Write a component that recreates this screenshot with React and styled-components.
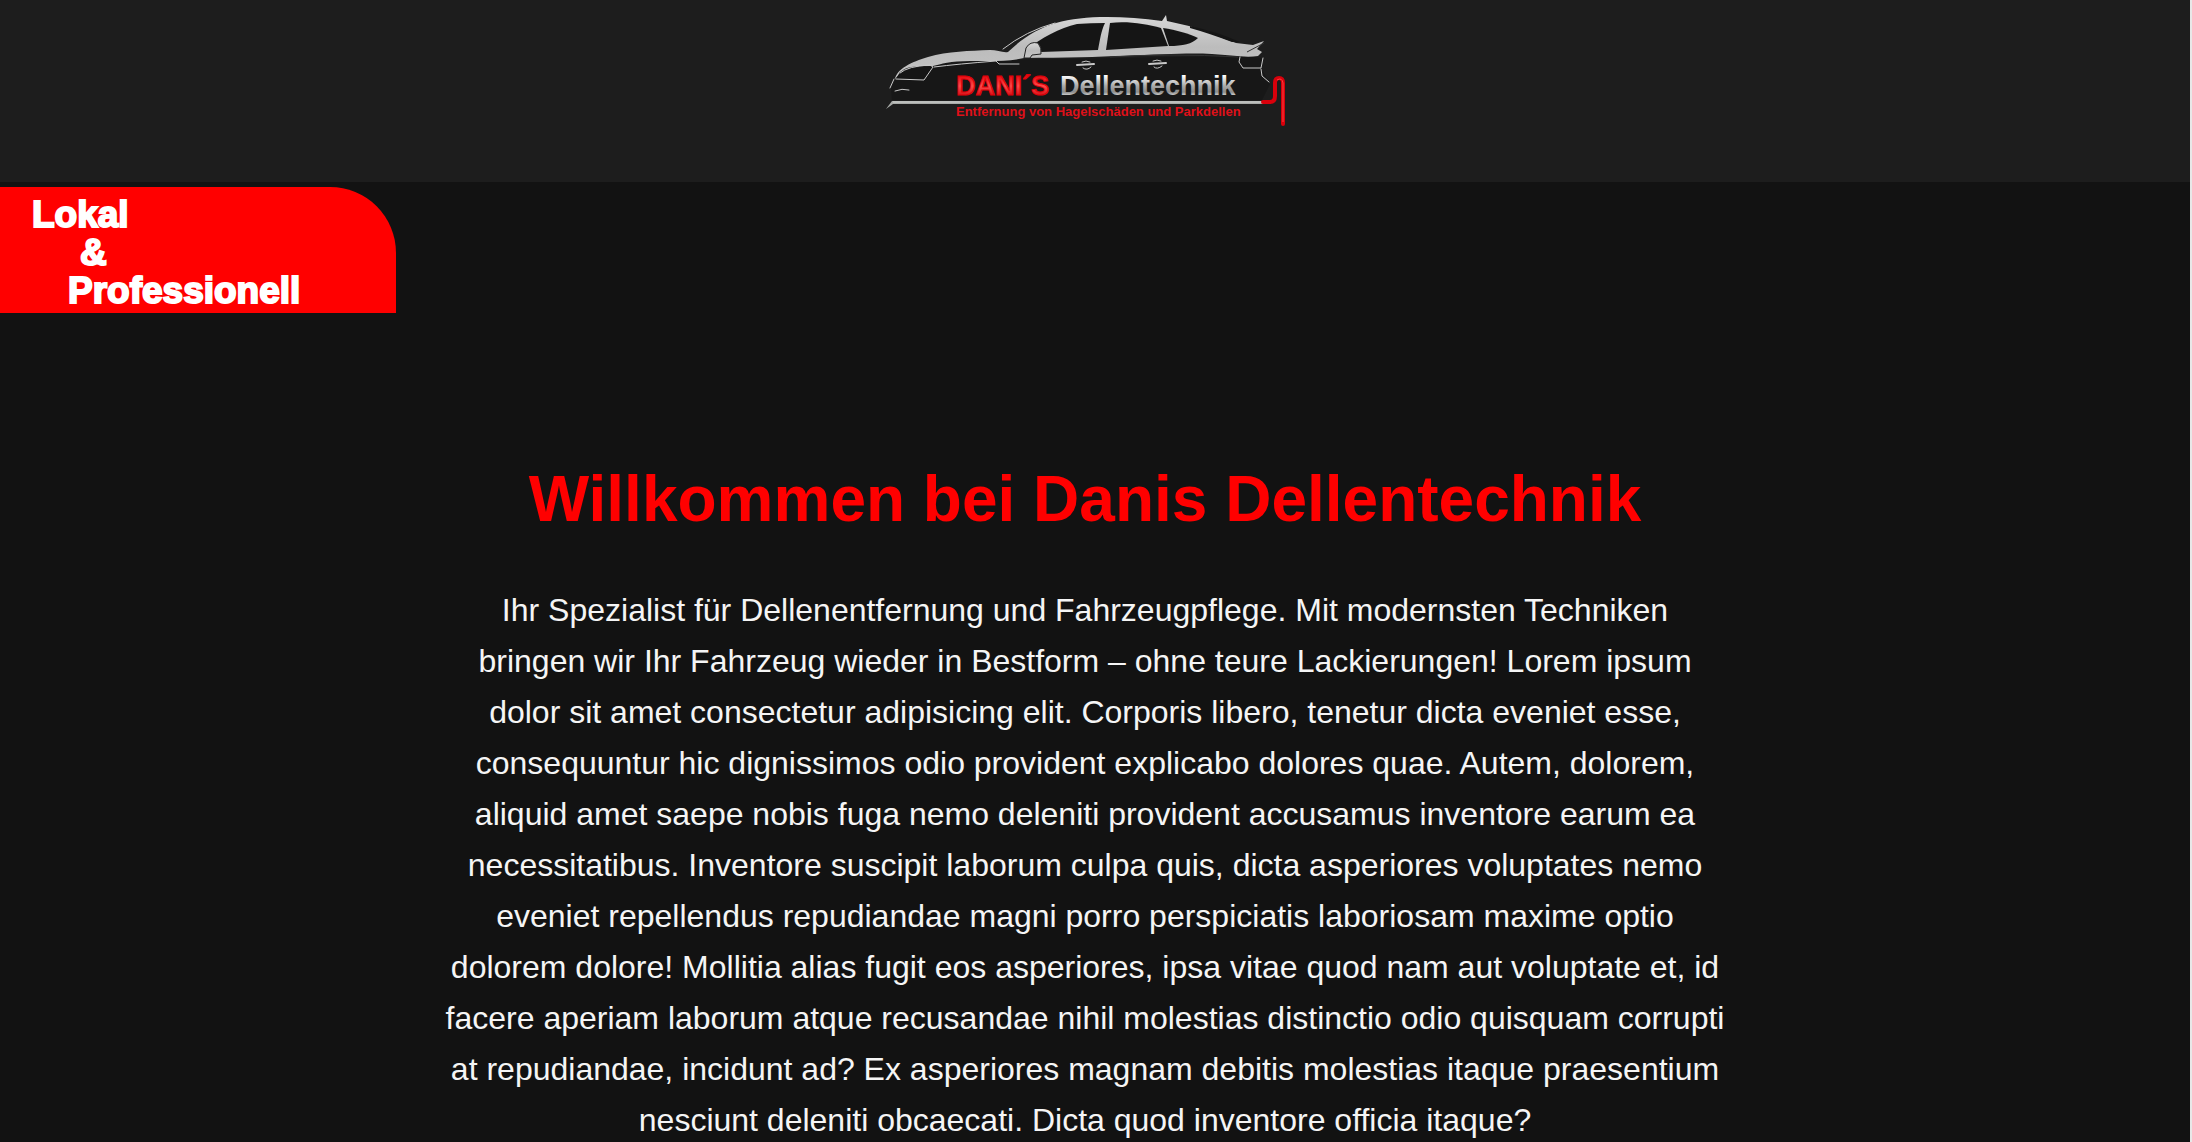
import React from "react";
import styled, { createGlobalStyle } from "styled-components";

const GlobalStyle = createGlobalStyle`
  * { box-sizing: border-box; }
  body {
    margin: 0;
    background: #121212;
    color: #f5f5f5;
    font-family: "Liberation Sans", Arial, sans-serif;
  }
`;

const Page = styled.div`
  min-height: 100vh;
  border-right: 2px solid #e8e8e8;
  overflow: hidden;
`;

const Header = styled.header`
  display: flex;
  justify-content: center;
  height: 182px;
  padding: 8px 18px 0 0;
  background: #1d1d1d;
`;

const LogoLink = styled.a`
  display: block;
  height: 132px;
`;

const Banner = styled.aside`
  width: 396px;
  margin-top: 5px;
  padding: 9px 32px 3px;
  border-top-right-radius: 66px;
  background: #ff0000;
  color: #ffffff;
  font-size: 37px;
  font-weight: bold;
  line-height: 38px;
  -webkit-text-stroke: 2px #ffffff;
`;

const Slogan = styled.span`
  display: block;
  padding-left: ${(p) => p.$indent}px;
`;

const Welcome = styled.main`
  display: flex;
  flex-direction: column;
  align-items: center;
  gap: 50px;
  padding: 150px 20px 0 0;
  text-align: center;
`;

const Title = styled.h1`
  margin: 0;
  color: #ff0000;
  font-size: 64px;
  line-height: 72px;
`;

const Intro = styled.p`
  max-width: 1280px;
  margin: 0;
  font-size: 32px;
  line-height: 51px;
`;

const LogoText = styled.text`
  font-weight: bold;
  font-size: ${(p) => p.$size}px;
`;

function Logo() {
  return (
    <svg width="420" height="132" viewBox="876 8 420 132" role="img" aria-label="Dani´s Dellentechnik">
      <defs>
        <linearGradient id="body" x1="0" y1="0" x2="0" y2="1">
          <stop offset="0" stopColor="#d8d8d8" />
          <stop offset="0.5" stopColor="#bcbcbc" />
          <stop offset="1" stopColor="#c4c4c4" />
        </linearGradient>
        <linearGradient id="chrome" x1="0" y1="0" x2="0" y2="1">
          <stop offset="0.15" stopColor="#ffffff" />
          <stop offset="0.5" stopColor="#a8a8a8" />
          <stop offset="0.7" stopColor="#8c8c8c" />
          <stop offset="0.85" stopColor="#e8e8e8" />
        </linearGradient>
        <linearGradient id="red" x1="0" y1="0" x2="0" y2="1">
          <stop offset="0.1" stopColor="#e00008" />
          <stop offset="0.5" stopColor="#ff4a4a" />
          <stop offset="0.9" stopColor="#c80008" />
        </linearGradient>
      </defs>
      <path fill="#171717" d="M897 78L935 64L1000 60L1240 56L1262 58L1261 68L1270 84L1262 100H892L891 88Z" />
      <path
        fill="url(#body)"
        d="M895 79C897 69 911 62 928 57C948 51 970 51 990 50C997 50 1003 53 1008 52C1020 40 1038 28 1056 23C1084 15 1123 16 1162 21L1166 15L1167 21L1189 26C1206 31 1219 37 1236 43L1253 45L1264 41L1257 49L1262 52L1258 56C1245 58 1230 55 1212 54C1170 52 1120 58 1024 58C1006 62 990 61 970 61C950 61 941 64 933 66C920 66 908 66 903 70L895 79Z"
      />
      <g fill="#151515">
        <path d="M1026 50C1041 38 1060 28 1077 24Q1091 23 1105 23C1101 31 1100 40 1098 50L1041 52Z" />
        <path d="M1110 23C1128 21 1146 24 1161 28L1168 46L1106 50Z" />
        <path d="M1163 28C1176 30 1190 34 1198 38C1192 44 1183 46 1169 46Z" />
        <path d="M1190 26Q1218 32 1240 42L1232 42Q1208 33 1190 28Z" />
        <path d="M900 72Q910 67 932 67L924 79L896 79Z" />
      </g>
      <g fill="none" stroke="#c8c8c8" strokeLinecap="round">
        <path d="M1003 49Q1026 31 1055 23" strokeWidth="1" />
        <path d="M896 79L924 80L933 67L930 65Q908 66 900 73" strokeWidth="1" />
        <path d="M934 67Q958 64 996 61L999 64H1019" strokeWidth="1" />
        <path d="M894 79L890 88M895 91Q902 88 909 90" strokeWidth="1" />
        <path d="M1240 57L1239 62L1243 68L1261 68L1263 58M1261 69L1262 76L1269 82" strokeWidth="1" />
        <path d="M1077 65L1094 64M1149 64L1166 63" strokeWidth="2" />
        <path d="M1082 62Q1086 60 1090 62M1083 68Q1087 71 1091 67M1153 61Q1157 59 1161 61M1154 67Q1157 70 1162 66" strokeWidth="1" />
      </g>
      <path d="M1247 52L1264 43M1110 57Q1170 53 1238 57" stroke="#333333" strokeWidth="1" fill="none" />
      <path d="M1024 58L1026 48Q1030 41 1038 43Q1042 48 1041 54L1032 55L1030 58Z" fill="url(#body)" stroke="#222222" />
      <path d="M886 109L892 101H1264V104H893Z" fill="#a8aba8" />
      <path d="M893 102H1264" stroke="#d0d2d0" />
      <path d="M1263 102H1270Q1275 102 1275 96V83Q1275 78 1279 78Q1283 78 1283 83V124" fill="none" stroke="#d9000b" strokeWidth="4" strokeLinecap="round" />
      <path d="M1277 80Q1282 77 1283 83V122" fill="none" stroke="#ff4040" strokeWidth="1" />
      <LogoText x="956" y="95" $size={27} fill="url(#red)" stroke="#e00008">DANI´S</LogoText>
      <LogoText x="1060" y="95" $size={27} fill="url(#chrome)">Dellentechnik</LogoText>
      <LogoText x="956" y="116" $size={13} fill="#df1019">Entfernung von Hagelschäden und Parkdellen</LogoText>
    </svg>
  );
}

export default function App() {
  return (
    <>
      <GlobalStyle />
      <Page>
        <Header>
          <LogoLink href="/">
            <Logo />
          </LogoLink>
        </Header>
        <Banner>
          <Slogan $indent={0}>Lokal</Slogan>
          <Slogan $indent={48}>&amp;</Slogan>
          <Slogan $indent={36}>Professionell</Slogan>
        </Banner>
        <Welcome>
          <Title>Willkommen bei Danis Dellentechnik</Title>
          <Intro>
            Ihr Spezialist für Dellenentfernung und Fahrzeugpflege. Mit modernsten Techniken bringen wir Ihr
            Fahrzeug wieder in Bestform – ohne teure Lackierungen! Lorem ipsum dolor sit amet consectetur
            adipisicing elit. Corporis libero, tenetur dicta eveniet esse, consequuntur hic dignissimos odio
            provident explicabo dolores quae. Autem, dolorem, aliquid amet saepe nobis fuga nemo deleniti
            provident accusamus inventore earum ea necessitatibus. Inventore suscipit laborum culpa quis, dicta
            asperiores voluptates nemo eveniet repellendus repudiandae magni porro perspiciatis laboriosam maxime
            optio dolorem dolore! Mollitia alias fugit eos asperiores, ipsa vitae quod nam aut voluptate et, id
            facere aperiam laborum atque recusandae nihil molestias distinctio odio quisquam corrupti at
            repudiandae, incidunt ad? Ex asperiores magnam debitis molestias itaque praesentium nesciunt deleniti
            obcaecati. Dicta quod inventore officia itaque?
          </Intro>
        </Welcome>
      </Page>
    </>
  );
}
